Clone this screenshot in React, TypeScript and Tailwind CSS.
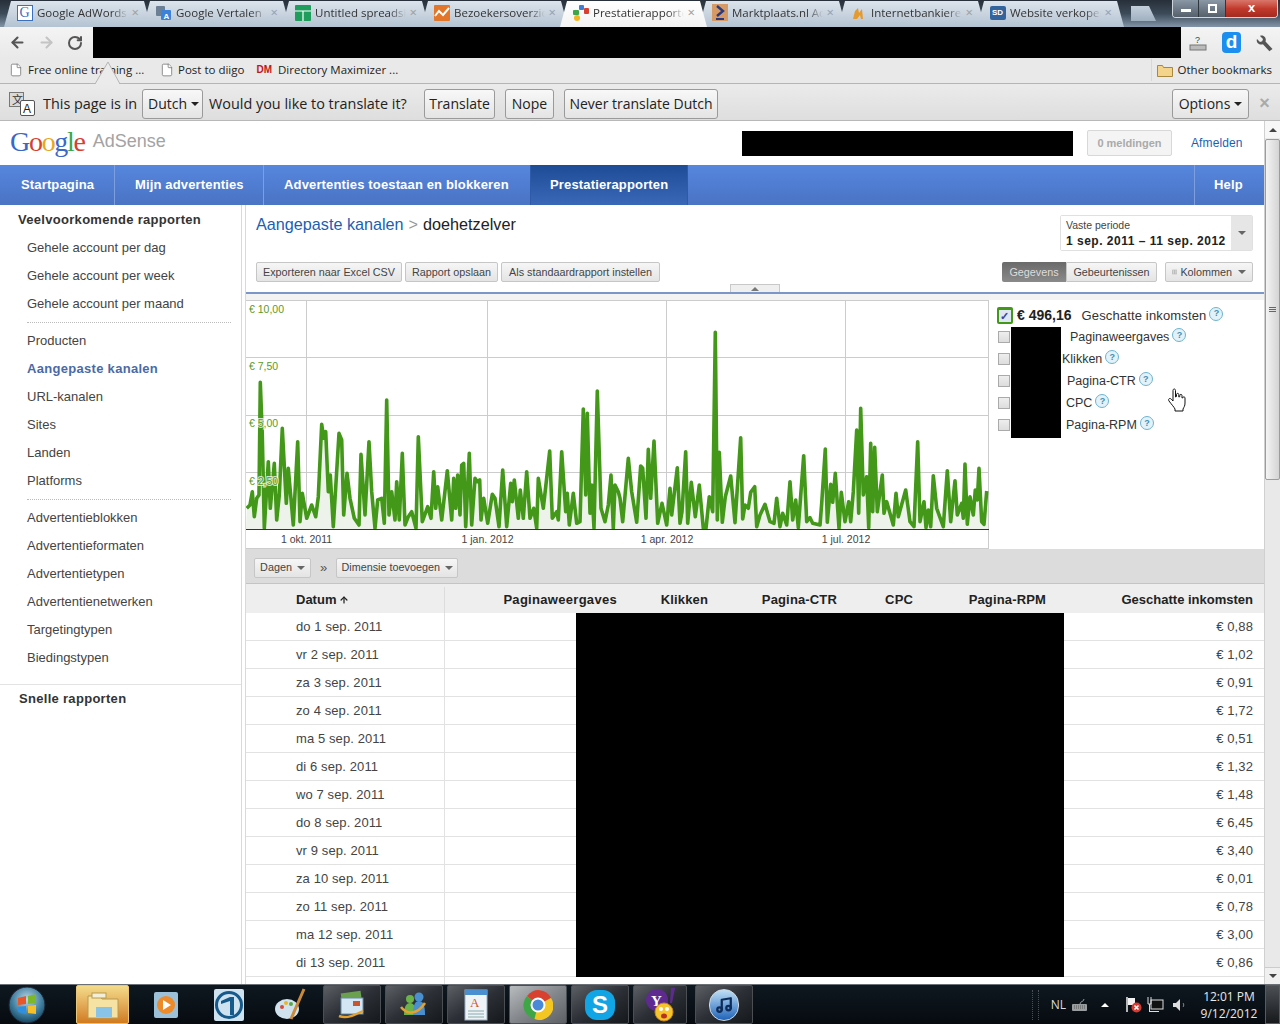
import React from "react";
import { ArrowLeft, ArrowRight, RotateCw, File, ArrowUp, Music } from "lucide-react";

const arial = "font-['Liberation_Sans',Arial,sans-serif]";
const ui = "font-['Open_Sans','Noto_Sans',sans-serif]";

// chart points read off the screenshot, two crops with their own x offset
const partA = [5,640,15,630,22,590,28,665,35,610,42,600,46,262,52,420,58,700,70,500,76,640,88,505,95,675,103,600,112,400,124,625,130,520,145,690,158,440,165,680,172,595,185,670,200,630,212,665,220,605,230,388,236,430,242,410,250,590,256,540,265,695,282,415,290,435,296,660,306,535,315,610,328,670,342,690,348,478,360,660,372,440,380,590,390,700,398,615,410,610,418,685,425,315,432,660,440,590,450,675,455,560,463,675,472,475,480,690,490,665,500,650,513,700,520,425,532,680,548,635,558,670,566,530,572,640,578,575,590,675,607,527,620,675,626,550,632,640,638,540,645,660,650,510,656,505,662,695,673,475,680,690,690,550,697,560,704,555,708,675,716,610,728,685,742,598,750,610,762,695,773,525,785,695,797,565,802,620,808,555,820,670,826,585,835,670,845,530,855,670,866,640,875,700,880,550,895,640,914,468,922,670,935,650,940,675,950,470,962,650,967,595,973,690,985,595,995,685,1005,680,1015,342,1022,600,1027,355,1035,655,1040,570,1047,700,1057,288,1068,640,1080,680,1090,630,1098,540,1105,700,1110,570,1120,590];
const partB = [0,610,8,680,25,490,35,590,50,682,62,513,68,520,78,670,85,463,92,610,102,438,113,685,126,625,140,690,150,580,155,660,172,518,180,685,186,650,197,470,203,685,214,562,226,665,238,570,250,700,258,700,268,605,278,650,286,112,292,675,298,472,307,682,316,605,332,543,345,683,362,428,368,672,375,630,385,640,392,592,404,575,410,695,420,660,435,628,450,680,462,685,470,610,480,695,488,655,500,690,510,560,518,675,527,615,535,698,551,482,560,680,570,668,578,685,600,690,605,625,616,462,622,682,632,568,638,622,646,535,657,700,664,592,675,680,686,620,692,680,700,590,710,405,716,655,722,340,730,600,740,545,746,698,752,445,758,650,764,457,772,650,787,540,792,655,800,620,820,690,828,595,835,665,857,585,870,680,882,695,893,440,900,680,912,620,918,698,925,645,932,695,940,542,950,640,970,695,982,527,992,680,1005,557,1012,660,1025,625,1030,670,1035,507,1042,688,1050,605,1060,660,1066,585,1072,615,1077,520,1085,680,1092,688,1100,588];

const toPoints = (arr: number[], off: number) => {
  const out: string[] = [];
  for (let i = 0; i < arr.length; i += 2) {
    out.push(`${(arr[i] / 3 + off - 246).toFixed(1)},${(arr[i + 1] / 3 + 295 - 300).toFixed(1)}`);
  }
  return out;
};
const linePts = [...toPoints(partA, 245), ...toPoints(partB, 620)].join(" ");

const rows = [
  ["do 1 sep. 2011", "€ 0,88"],
  ["vr 2 sep. 2011", "€ 1,02"],
  ["za 3 sep. 2011", "€ 0,91"],
  ["zo 4 sep. 2011", "€ 1,72"],
  ["ma 5 sep. 2011", "€ 0,51"],
  ["di 6 sep. 2011", "€ 1,32"],
  ["wo 7 sep. 2011", "€ 1,48"],
  ["do 8 sep. 2011", "€ 6,45"],
  ["vr 9 sep. 2011", "€ 3,40"],
  ["za 10 sep. 2011", "€ 0,01"],
  ["zo 11 sep. 2011", "€ 0,78"],
  ["ma 12 sep. 2011", "€ 3,00"],
  ["di 13 sep. 2011", "€ 0,86"],
  ["", ""],
];

const groups = [
  ["Gehele account per dag", "Gehele account per week", "Gehele account per maand"],
  ["Producten", "Aangepaste kanalen", "URL-kanalen", "Sites", "Landen", "Platforms"],
  ["Advertentieblokken", "Advertentieformaten", "Advertentietypen", "Advertentienetwerken", "Targetingtypen", "Biedingstypen"],
];

const legend = [
  { label: "Paginaweergaves", spacer: "w-[60px]" },
  { label: "Klikken", spacer: "w-[52px]" },
  { label: "Pagina-CTR", spacer: "w-[57px]" },
  { label: "CPC", spacer: "w-[56px]" },
  { label: "Pagina-RPM", spacer: "w-[56px]" },
];

const Caret = ({ className = "" }: { className?: string }) => (
  <span className={`inline-block w-0 h-0 border-x-[4px] border-x-transparent border-t-[4px] border-t-[#666] ${className}`} />
);

const HelpDot = () => (
  <span className={`ml-[3px] -mt-1 inline-flex items-center justify-center w-[14px] h-[14px] rounded-full border border-[#6db3d0] bg-[#e3f2f8] text-[9px] font-bold leading-none text-[#3f8fb5] ${arial}`}>?</span>
);

const GrayBtn = ({ children, className = "" }: { children: React.ReactNode; className?: string }) => (
  <button className={`h-[20px] px-[6px] rounded-[2px] border border-[#c6c6c6] bg-gradient-to-b from-[#f6f6f6] to-[#e4e4e4] text-[10.800px] text-[#444] flex items-center whitespace-nowrap ${className}`}>
    {children}
  </button>
);

const TransBtn = ({ children, className = "" }: { children: React.ReactNode; className?: string }) => (
  <button className={`h-[30px] px-[5px] rounded-[3px] border border-[#9a9a9a] bg-gradient-to-b from-[#f8f8f8] to-[#e4e4e4] text-[14px] text-[#222] flex items-center gap-[4px] whitespace-nowrap ${className}`}>
    {children}
  </button>
);

const tabs: { title: string; icon: React.ReactNode; active?: boolean }[] = [
  {
    title: "Google AdWords",
    icon: <span className="w-[16px] h-[16px] border border-[#3b6fc0] bg-white text-[#3b6fc0] text-[14px] leading-[14px] text-center font-['Liberation_Serif',serif]">G</span>,
  },
  {
    title: "Google Vertalen",
    icon: (
      <svg width="17" height="17" viewBox="0 0 17 17">
        <rect x="1" y="2" width="9" height="10" rx="1" fill="#6b7f95" />
        <rect x="6" y="6" width="10" height="10" rx="1" fill="#3b82d8" />
        <text x="8.5" y="14.5" fontSize="8" fill="#fff" fontWeight="bold" fontFamily="Liberation Sans">A</text>
      </svg>
    ),
  },
  {
    title: "Untitled spreadsheet",
    icon: (
      <svg width="16" height="16" viewBox="0 0 16 16">
        <rect width="16" height="16" rx="1" fill="#1f9d5c" />
        <path d="M0 6h16M8 6v10" stroke="#fff" strokeWidth="1.2" />
      </svg>
    ),
  },
  {
    title: "Bezoekersoverzicht",
    icon: (
      <svg width="16" height="16" viewBox="0 0 16 16">
        <rect width="16" height="16" rx="1" fill="#e2762a" />
        <path d="M1 11l4-5 4 4 6-7" stroke="#fff" strokeWidth="2" fill="none" />
      </svg>
    ),
  },
  {
    title: "Prestatierapporten",
    active: true,
    icon: (
      <svg width="16" height="16" viewBox="0 0 16 16">
        <rect x="6" y="0" width="5" height="5" fill="#3f7fdc" rx="1" />
        <rect x="11" y="3" width="5" height="6" fill="#d8402f" rx="1" />
        <rect x="0" y="5" width="6" height="5" fill="#3fa648" rx="1" />
        <circle cx="4" cy="13" r="3" fill="#f3b521" />
      </svg>
    ),
  },
  {
    title: "Marktplaats.nl Advertentie",
    icon: (
      <svg width="16" height="17" viewBox="0 0 16 17">
        <rect width="16" height="17" fill="#d59a66" />
        <path d="M5 2l6 5-6 5" stroke="#2a3a80" strokeWidth="2.4" fill="none" />
        <path d="M4 15h8" stroke="#2a3a80" strokeWidth="2" />
      </svg>
    ),
  },
  {
    title: "Internetbankieren",
    icon: (
      <svg width="16" height="16" viewBox="0 0 16 16">
        <path d="M2 14l2-8 3-3 1 5 3-4 1 10h-2l-1-4-3 4z" fill="#e49a2c" />
      </svg>
    ),
  },
  {
    title: "Website verkopen",
    icon: <span className={`w-[16px] h-[14px] rounded-[2px] bg-[#33649c] text-white text-[8px] leading-[14px] text-center font-bold ${arial}`}>SD</span>,
  },
];

const TabStrip = () => (
  <div className="h-[27px] shrink-0 relative flex items-end pl-[4px] bg-gradient-to-b from-[#27303a] via-[#3c4a58] to-[#8295a8]">
    {tabs.map((t) => (
      <div
        key={t.title}
        className={`w-[147px] -mr-[8px] h-[26px] shrink-0 flex items-center pl-[12px] pr-[12px] pb-[3px] gap-[4px] [clip-path:polygon(7px_0,calc(100%-7px)_0,100%_100%,0_100%)] ${
          t.active ? "relative z-10 bg-gradient-to-b from-white to-[#f3f3f3]" : "bg-gradient-to-b from-[#dce4ec] to-[#b4c3d2]"
        }`}
      >
        <span className="w-[17px] h-[17px] shrink-0 flex items-center justify-center">{t.icon}</span>
        <span className={`flex-1 overflow-hidden whitespace-nowrap text-[11.500px] text-[#333] [mask-image:linear-gradient(90deg,#000_82%,transparent)] ${ui}`}>{t.title}</span>
        <span className="text-[#9aa3ad] text-[13px] leading-none">×</span>
      </div>
    ))}
    <div className="ml-[10px] mb-[6px] w-[30px] h-[15px] bg-gradient-to-b from-[#c4d0dc] to-[#9fb0c0] [clip-path:polygon(5px_0,calc(100%-7px)_0,100%_100%,5px_100%)]" />
    <div className="absolute right-[2px] top-0 h-[18px] w-[106px] flex rounded-b-[4px] border border-t-0 border-[#cfd6dd] overflow-hidden">
      <div className="w-[26px] bg-gradient-to-b from-[#8a97a5] to-[#55606c] flex items-center justify-center border-r border-[#30363d]">
        <span className="w-[10px] h-[3px] mt-[4px] bg-white" />
      </div>
      <div className="w-[27px] bg-gradient-to-b from-[#8a97a5] to-[#55606c] flex items-center justify-center border-r border-[#30363d]">
        <span className="w-[9px] h-[9px] border-2 border-white" />
      </div>
      <div className={`flex-1 bg-gradient-to-b from-[#d9766a] via-[#c23a2c] to-[#a42a20] text-white text-center text-[13px] leading-[16px] font-bold ${arial}`}>x</div>
    </div>
  </div>
);

const Toolbar = () => (
  <div className="h-[31px] shrink-0 flex items-center bg-gradient-to-b from-[#f4f4f4] to-[#e9e9e9]">
    <div className="w-[93px] flex items-center pl-[9px] gap-[12px]">
      <ArrowLeft size={17} strokeWidth={3} color="#555" />
      <ArrowRight size={17} strokeWidth={3} color="#c4c4c4" />
      <RotateCw size={16} strokeWidth={3} color="#555" />
    </div>
    <div className="w-[1088px] h-full bg-black" />
    <div className="flex-1 flex items-center pl-[7px]">
      <svg width="20" height="20" viewBox="0 0 20 20">
        <text x="7" y="10" fontSize="9" fill="#444" fontFamily="Liberation Sans">?</text>
        <rect x="2" y="12" width="16" height="5" fill="#bbb" stroke="#777" />
      </svg>
      <span className={`ml-[14px] w-[19px] h-[21px] rounded-[4px] bg-[#1b8ef0] text-white text-[19px] leading-[19px] text-center font-bold ${arial}`}>d</span>
      <svg className="ml-[15px]" width="18" height="18" viewBox="0 0 18 18">
        <path d="M16.5 15l-7-7.5c.8-2.2 0-4.5-2-5.5C6.300 1.400 5 1.400 4 2l3 3-.8 2.200L4 8 1 5c-.6 1.400-.3 3 .9 4.300 1.300 1.200 3.300 1.600 5 .9l6.500 7z" fill="#555" />
      </svg>
    </div>
  </div>
);

const Bookmarks = () => (
  <div className={`h-[26px] shrink-0 relative flex items-center text-[11.500px] text-[#222] bg-[#e9e9e9] border-b border-[#b5b5b5] pl-[9px] pb-[2px] ${ui}`}>
    <File size={14} color="#666" fill="#fff" strokeWidth={1.2} />
    <span className="ml-[5px] w-[118px] whitespace-nowrap overflow-hidden">Free online training ...</span>
    <File size={14} color="#666" fill="#fff" strokeWidth={1.2} className="ml-[14px]" />
    <span className="ml-[4px]">Post to diigo</span>
    <span className={`ml-[12px] text-[10px] font-bold text-[#c01818] ${arial}`}>DM</span>
    <span className="ml-[6px]">Directory Maximizer ...</span>
    {/* arrow of the translate bubble, drawn over the bookmark */}
    <svg className="absolute left-[95px] top-[4px]" width="26" height="22" viewBox="0 0 26 22">
      <path d="M0 22L13 0l12 22z" fill="#ebebeb" stroke="#b5b5b5" />
      <path d="M1 22h23" stroke="#ebebeb" strokeWidth="2" />
    </svg>
    <span className="ml-auto h-[22px] border-l border-[#d8d8d8]" />
    <svg className="ml-[5px]" width="16" height="14" viewBox="0 0 16 14">
      <path d="M.5 2.500h5l1 2h9v9H.5z" fill="#f3d48a" stroke="#a8873f" />
    </svg>
    <span className="ml-[5px] pr-[8px]">Other bookmarks</span>
  </div>
);

const TranslateBar = () => (
  <div className={`h-[37px] shrink-0 flex items-center pt-[3px] bg-gradient-to-b from-[#ebebeb] to-[#dedede] border-b border-[#b8b8b8] text-[14.400px] text-[#222] ${ui}`}>
    <svg className="ml-[9px]" width="27" height="27" viewBox="0 0 27 27">
      <rect x="0.500" y="2.500" width="14" height="14" fill="#d9d9d9" stroke="#777" />
      <text x="3" y="14" fontSize="11" fill="#333" fontFamily="Noto Sans CJK SC">文</text>
      <rect x="11.500" y="10.500" width="14" height="15" rx="1.500" fill="#fff" stroke="#555" />
      <text x="14" y="23" fontSize="12" fill="#222" fontFamily="Liberation Sans">A</text>
    </svg>
    <span className="ml-[7px] w-[94px] whitespace-nowrap">This page is in</span>
    <TransBtn className="ml-[5px] w-[61px]">Dutch <span className="w-0 h-0 border-x-[4px] border-x-transparent border-t-[4px] border-t-[#222]" /></TransBtn>
    <span className="ml-[6px] w-[198px] whitespace-nowrap">Would you like to translate it?</span>
    <TransBtn className="ml-[17px] w-[71px] justify-center">Translate</TransBtn>
    <TransBtn className="ml-[10px] w-[49px] justify-center">Nope</TransBtn>
    <TransBtn className="ml-[10px] w-[154px] justify-center">Never translate Dutch</TransBtn>
    <TransBtn className="ml-auto w-[77px] justify-center">Options <span className="w-0 h-0 border-x-[4px] border-x-transparent border-t-[4px] border-t-[#222]" /></TransBtn>
    <span className={`w-[31px] text-center text-[18px] font-bold text-[#aaa] ${arial}`}>×</span>
  </div>
);

const TopNav = () => (
  <div className={`h-[40px] shrink-0 flex items-stretch bg-gradient-to-b from-[#5686de] to-[#4a74c4] text-white text-[13px] font-bold tracking-[0.15px] ${arial}`}>
    <div className="w-[115px] flex items-center pl-[21px] border-r border-[#7d9fdf]">Startpagina</div>
    <div className="w-[149px] flex items-center pl-[20px] border-r border-[#7d9fdf]">Mijn advertenties</div>
    <div className="w-[266px] flex items-center pl-[20px]">Advertenties toestaan en blokkeren</div>
    <div className="w-[158px] flex items-center pl-[19px] border-x border-[#2f5aa8] bg-gradient-to-b from-[#1e4c96] to-[#3a68b8]">Prestatierapporten</div>
    <div className="ml-auto w-[70px] flex items-center pl-[19px] border-l border-[#7d9fdf]">Help</div>
  </div>
);

const Sidebar = () => (
  <div className={`w-[242px] shrink-0 border-r border-[#d9d9d9] text-[13px] text-[#444] ${arial}`}>
    <div className="pl-[18px] pt-[1px] h-[29px] font-bold tracking-[0.3px] text-[#333] flex items-center">Veelvoorkomende rapporten</div>
    {groups.map((g, gi) => (
      <div key={gi} className={gi < 2 ? "ml-[27px] mr-[10px] flex flex-col border-b border-dotted border-[#bbb] pb-[4px] mb-[4px]" : "pl-[27px] flex flex-col border-b border-[#e3e3e3] pb-[12px]"}>
        {g.map((item) => (
          <div key={item} className={`h-[28px] flex items-center ${item === "Aangepaste kanalen" ? "font-bold tracking-[0.3px] text-[#4a6aa5]" : ""}`}>{item}</div>
        ))}
      </div>
    ))}
    <div className="pl-[19px] h-[28px] font-bold tracking-[0.3px] text-[#333] flex items-center">Snelle rapporten</div>
  </div>
);

const Chart = () => (
  <svg className="w-[743px] h-[249px] shrink-0 block" viewBox="0 0 743 249">
    <g stroke="#cccccc" strokeWidth="1" shapeRendering="crispEdges">
      <path d="M0 .5H743M0 57.500H743M0 115.500H743M0 172.500H743" />
      <path d="M60.500 0V229M241.500 0V229M420.500 0V229M599.500 0V229" />
      <path d="M742.500 0V249M0 248.500H743" />
    </g>
    <polygon points={`0,229 ${linePts} 742,229`} fill="#edf3ea" />
    <polyline points={linePts} fill="none" stroke="#43981a" strokeWidth="3.600" strokeLinejoin="round" />
    <path d="M0 229.500H743" stroke="#333" strokeWidth="1" shapeRendering="crispEdges" />
    <g fontSize="10.500" fill="#5a9a28" fontFamily="Liberation Sans" stroke="#ffffff" strokeOpacity="0.75" strokeWidth="2" paintOrder="stroke">
      <text x="3" y="13">€ 10,00</text>
      <text x="3" y="70">€ 7,50</text>
      <text x="3" y="127">€ 5,00</text>
      <text x="3" y="185">€ 2,50</text>
    </g>
    <g fontSize="10.500" fill="#444" fontFamily="Liberation Sans" textAnchor="middle">
      <text x="60.500" y="243">1 okt. 2011</text>
      <text x="241.500" y="243">1 jan. 2012</text>
      <text x="421" y="243">1 apr. 2012</text>
      <text x="600" y="243">1 jul. 2012</text>
    </g>
  </svg>
);

const Legend = () => (
  <div className={`relative flex-1 pl-[8px] pt-[6px] text-[12.500px] text-[#333] ${arial}`}>
    <div className="h-[19px] flex items-center text-[13px] tracking-[0.15px]">
      <span className="w-[16px] h-[17px] rounded-[2px] bg-[#43981a] flex items-center justify-center">
        <span className="w-[12px] h-[12px] bg-[#dfe6f4] text-[#34479c] text-[11px] leading-[12px] text-center font-bold">✓</span>
      </span>
      <span className="ml-[4px] text-[14px] font-bold tracking-normal text-[#222]">€ 496,16</span>
      <span className="ml-[10px]">Geschatte inkomsten</span>
      <HelpDot />
    </div>
    {legend.map((l, i) => (
      <div key={l.label} className={`h-[22px] flex items-center pl-[1px] ${i === 0 ? "mt-[1px]" : ""}`}>
        <span className="w-[12px] h-[12px] shrink-0 border border-[#aaa] bg-gradient-to-b from-[#eee] to-[#ddd]" />
        <span className={`${l.spacer} shrink-0`} />
        <span>{l.label}</span>
        <HelpDot />
      </div>
    ))}
    <div className="absolute left-[22px] top-[27px] w-[50px] h-[111px] bg-black" />
    <svg className="absolute left-[178px] top-[88px]" width="20" height="24" viewBox="0 0 20 24">
      <path d="M6 2.500c0-2 2.500-2 2.500 0V9l1-.5V6.500c0-1.500 2.300-1.500 2.300 0V9l1-.3V7.500c0-1.500 2.200-1.500 2.200 0V10l.8-.2c0-1.300 2.200-1.300 2.200.2v5c0 3-1 4-2 6v2H8v-2c-1-2-3-4-6-8-1.300-2 .8-3.500 2.300-1.800L6 13z" fill="#fff" stroke="#111" strokeWidth="1" />
    </svg>
  </div>
);

const Main = () => (
  <div className={`relative flex-1 min-w-0 ml-[3px] border-l border-[#d9d9d9] flex flex-col ${arial}`}>
    <div className="h-[88px] shrink-0 relative px-[10px] bg-white">
      <div className="pt-[8px] flex items-center text-[16.200px] leading-[22px]">
        <span className="text-[#1a5fb4]">Aangepaste kanalen</span>
        <span className="ml-[5px] text-[#999]">&gt;</span>
        <span className="ml-[5px] text-[#222]">doehetzelver</span>
      </div>
      <div className="absolute right-[11px] top-[10px] w-[193px] h-[36px] flex border border-[#e0e0e0] rounded-[2px]">
        <div className="flex-1 pl-[5px] pt-[3px] bg-white">
          <div className="text-[10.500px] leading-[13px] text-[#444]">Vaste periode</div>
          <div className="mt-[1px] text-[12px] leading-[16px] font-bold tracking-[0.5px] text-[#222] whitespace-nowrap">1 sep. 2011 – 11 sep. 2012</div>
        </div>
        <div className="w-[21px] bg-[#e6e6e6] flex items-center justify-center"><Caret /></div>
      </div>
      <div className="absolute left-[10px] right-[11px] top-[57px] flex items-center">
        <GrayBtn className="w-[146px] justify-center">Exporteren naar Excel CSV</GrayBtn>
        <GrayBtn className="ml-[3px] w-[93px] justify-center">Rapport opslaan</GrayBtn>
        <GrayBtn className="ml-[3px] w-[159px] justify-center">Als standaardrapport instellen</GrayBtn>
        <div className="ml-auto flex">
          <span className="w-[64px] h-[20px] rounded-l-[2px] bg-gradient-to-b from-[#6a6a6a] to-[#8a8a8a] text-[#ddd] text-[10.800px] flex items-center justify-center">Gegevens</span>
          <GrayBtn className="w-[91px] justify-center !rounded-l-none">Gebeurtenissen</GrayBtn>
        </div>
        <GrayBtn className="ml-[8px] w-[88px] justify-center gap-[3px]">
          <svg width="10" height="8" viewBox="0 0 10 8"><path d="M.5.500h9v7h-9zM.5 4h9M5 .5v7" fill="none" stroke="#999" /></svg>
          Kolommen <Caret className="ml-[3px]" />
        </GrayBtn>
      </div>
      <div className="absolute left-0 right-0 bottom-[-1px] h-[2px] bg-[#7b97c8]" />
      <div className="absolute left-[484px] bottom-[1px] w-[50px] h-[8px] bg-[#efefef] border border-b-0 border-[#c8c8c8] flex items-center justify-center">
        <span className="w-0 h-0 border-x-[4px] border-x-transparent border-b-[4px] border-b-[#777]" />
      </div>
    </div>
    <div className="h-[7px] shrink-0 bg-[#f3f3f3]" />
    <div className="h-[249px] shrink-0 flex">
      <Chart />
      <Legend />
    </div>
    <div className="h-[35px] shrink-0 flex items-center pl-[8px] pt-[3px] bg-[#dcdcdc] border-b border-[#c4c4c4]">
      <GrayBtn className="w-[57px] justify-center gap-[5px]">Dagen <Caret /></GrayBtn>
      <span className="ml-[9px] text-[13px] text-[#555]">»</span>
      <GrayBtn className="ml-[9px] w-[122px] justify-center gap-[5px]">Dimensie toevoegen <Caret /></GrayBtn>
    </div>
    <div className="flex-1 min-h-0 overflow-hidden relative">
      <div className="grid grid-cols-[199px_182px_91px_129px_76px_133px_207px] h-[29px] pt-[3px] bg-[#eeeeee] items-center text-[13px] font-bold text-[#222] text-right [&>span]:pr-[10px]">
        <span className="h-full flex items-center justify-start pl-[50px] gap-[3px] border-r border-[#dcdcdc]">Datum <ArrowUp size={10} strokeWidth={3} /></span>
        <span className="tracking-[0.3px]">Paginaweergaves</span>
        <span className="tracking-[0.15px]">Klikken</span>
        <span className="tracking-[0.15px]">Pagina-CTR</span>
        <span className="tracking-[0.15px]">CPC</span>
        <span className="tracking-[0.15px]">Pagina-RPM</span>
        <span>Geschatte inkomsten</span>
      </div>
      {rows.map(([d, v], i) => (
        <div key={i} className="h-[28px] flex items-center border-b border-[#e2e2e2] text-[13px] tracking-[0.1px] text-[#444]">
          <span className="w-[199px] h-full flex items-center pl-[50px] border-r border-[#e2e2e2]">{d}</span>
          <span className="ml-auto pr-[11px]">{v}</span>
        </div>
      ))}
      <div className="absolute left-[330px] top-[29px] w-[488px] h-[364px] bg-black" />
    </div>
  </div>
);

const Scrollbar = () => (
  <div className="w-[16px] shrink-0 flex flex-col bg-[#e9e9e9] border-l border-[#d0d0d0]">
    <div className="h-[17px] flex items-center justify-center bg-[#f7f7f7]">
      <span className="w-0 h-0 border-x-[4px] border-x-transparent border-b-[4px] border-b-[#444]" />
    </div>
    <div className="mt-[1px] h-[341px] flex flex-col items-center justify-center gap-[1px] bg-gradient-to-r from-[#f4f4f4] to-[#d4d4d4] border border-[#9c9c9c] rounded-[2px]">
      <span className="w-[7px] h-px bg-[#666]" />
      <span className="w-[7px] h-px bg-[#666]" />
      <span className="w-[7px] h-px bg-[#666]" />
    </div>
    <div className="mt-auto h-[17px] flex items-center justify-center bg-[#f0f0f0] border-t border-[#ccc]">
      <span className="w-0 h-0 border-x-[4px] border-x-transparent border-t-[4px] border-t-[#444]" />
    </div>
  </div>
);

const AppBox = ({ children, className = "" }: { children: React.ReactNode; className?: string }) => (
  <div className={`w-[58px] h-[39px] shrink-0 flex items-center justify-center rounded-[2px] border border-[#4b4f54] bg-gradient-to-br from-[#5c6065] via-[#2c3036] to-[#15181c] ${className}`}>
    {children}
  </div>
);

const Taskbar = () => (
  <div className={`h-[40px] shrink-0 flex items-center border-t border-[#6b7076] bg-gradient-to-b from-[#0e1820] to-[#070b10] ${ui}`}>
    <svg className="ml-[8px]" width="38" height="38" viewBox="0 0 38 38">
      <defs>
        <radialGradient id="orb" cx="50%" cy="35%" r="70%">
          <stop offset="0%" stopColor="#bcd8e8" />
          <stop offset="60%" stopColor="#3f7e9e" />
          <stop offset="100%" stopColor="#0d3a52" />
        </radialGradient>
      </defs>
      <circle cx="19" cy="19" r="18" fill="url(#orb)" stroke="#223" />
      <path d="M10 12l8-2v8l-8 1z" fill="#e8562a" />
      <path d="M20 10l8-2v9l-8 1z" fill="#7cb82a" />
      <path d="M10 21l8-1v8l-8-2z" fill="#2f8fe0" />
      <path d="M20 20l8-1v9l-8-1z" fill="#f6c02a" />
    </svg>
    <div className="ml-[22px] w-[8px]" />
    <div className="w-[53px] h-[39px] shrink-0 flex items-center justify-center rounded-[2px] border border-[#e8c878] bg-gradient-to-b from-[#f3dc8a] to-[#d07a1c]">
      <svg width="34" height="30" viewBox="0 0 34 30">
        <path d="M2 6h12l2 3h16v19H2z" fill="#f6e3a3" stroke="#b89a50" />
        <rect x="6" y="3" width="14" height="5" fill="#f3eed8" stroke="#b89a50" />
        <rect x="10" y="17" width="16" height="10" fill="#8ac3e8" />
      </svg>
    </div>
    <div className="w-[8px]" />
    <div className="w-[58px] flex justify-center">
      <svg width="26" height="30" viewBox="0 0 26 30">
        <rect x="1" y="2" width="24" height="26" rx="2" fill="#9cc0d8" />
        <circle cx="13" cy="15" r="9" fill="#ed8a2a" />
        <path d="M10 10l8 5-8 5z" fill="#fff" />
      </svg>
    </div>
    <div className="w-[3px]" />
    <div className="w-[62px] flex justify-center">
      <svg width="32" height="34" viewBox="0 0 32 34">
        <rect x="1" y="1" width="30" height="32" rx="2" fill="#cfe2ef" />
        <circle cx="16" cy="17" r="12.500" fill="none" stroke="#155a8a" strokeWidth="3" />
        <path d="M8 13l9-4h4v18h-4V13l-9 3z" fill="#155a8a" />
      </svg>
    </div>
    <div className="w-[60px] flex justify-center">
      <svg width="32" height="34" viewBox="0 0 32 34">
        <ellipse cx="13" cy="21" rx="12" ry="10" fill="#cfe2ee" />
        <circle cx="8" cy="19" r="2" fill="#d64a3a" />
        <circle cx="12" cy="15" r="2" fill="#e9b42a" />
        <circle cx="17" cy="16" r="2" fill="#58a844" />
        <path d="M30 1L17 31" stroke="#c98a3a" strokeWidth="3" />
      </svg>
    </div>
    <div className="w-[3px]" />
    <div className="flex gap-[4px]">
      <AppBox>
        <svg width="32" height="32" viewBox="0 0 32 32">
          <rect x="6" y="3" width="20" height="20" fill="#6aa050" transform="rotate(-8 16 13)" />
          <rect x="5" y="9" width="22" height="16" fill="#d3e6f3" stroke="#6b8ba4" />
          <rect x="17" y="12" width="7" height="5" fill="#c9552f" />
          <path d="M3 27c8 3 16-1 24-5" stroke="#e6a02c" strokeWidth="2.500" fill="none" />
        </svg>
      </AppBox>
      <AppBox>
        <svg width="32" height="32" viewBox="0 0 32 32">
          <circle cx="12" cy="10" r="4" fill="#6bb24a" />
          <path d="M6 26c0-8 2-12 6-12s6 4 6 12z" fill="#6bb24a" />
          <circle cx="21" cy="8" r="4.500" fill="#4a8fd0" />
          <path d="M15 26c0-10 2-14 6-14s6 4 6 14z" fill="#4a8fd0" />
          <path d="M3 18c6 8 16 8 24-4" stroke="#e6a02c" strokeWidth="2.500" fill="none" />
        </svg>
      </AppBox>
      <AppBox>
        <svg width="26" height="34" viewBox="0 0 26 34">
          <rect x="2" y="2" width="22" height="30" fill="#eef3f8" stroke="#9bb0c4" />
          <rect x="2" y="2" width="22" height="5" fill="#4a8fd0" />
          <text x="7" y="19" fontSize="13" fill="#d2552a" fontFamily="Liberation Serif">A</text>
          <path d="M5 23h16M5 26h16M5 29h16" stroke="#8aa" />
        </svg>
      </AppBox>
      <AppBox className="!from-[#b9bcbf] !via-[#84878b] !to-[#5d6064]">
        <svg width="30" height="30" viewBox="0 0 30 30">
          <path d="M15 15L4 6a14 14 0 0 1 24 2z" fill="#d8402f" />
          <path d="M15 15L4 6a14 14 0 0 0 7.500 23z" fill="#3fa648" />
          <path d="M15 15l13-7a14 14 0 0 1-16.500 21z" fill="#f3c622" />
          <circle cx="15" cy="15" r="6.500" fill="#4a88d8" stroke="#fff" strokeWidth="2" />
        </svg>
      </AppBox>
      <AppBox>
        <span className={`w-[30px] h-[30px] rounded-[12px] bg-[#12a5e6] text-white text-[24px] leading-[30px] text-center font-bold ${arial}`}>S</span>
      </AppBox>
      <AppBox className="!w-[54px]">
        <svg width="34" height="36" viewBox="0 0 34 36">
          <circle cx="14" cy="13" r="11" fill="#5f2a8f" />
          <text x="8" y="19" fontSize="15" fill="#fff" fontWeight="bold" fontFamily="Liberation Serif">Y</text>
          <path d="M28 1h4l-3 15h-2z" fill="#5f2a8f" />
          <circle cx="21" cy="25" r="9" fill="#f6c52c" stroke="#c98a1c" />
          <ellipse cx="21" cy="29" rx="3" ry="2.500" fill="#b9321f" />
          <circle cx="18" cy="22" r="2" fill="#fff" />
          <circle cx="24" cy="22" r="2" fill="#fff" />
        </svg>
      </AppBox>
      <AppBox className="ml-[4px]">
        <span className="w-[30px] h-[32px] rounded-full bg-gradient-to-b from-[#bfe0f5] to-[#1d63b8] border border-[#cfd8e0] flex items-center justify-center">
          <Music size={18} color="#0c2b58" strokeWidth={3} />
        </span>
      </AppBox>
    </div>
    <div className="ml-auto flex items-center text-white">
      <div className="h-[30px] w-[7px] border-x border-dotted border-[#4a4f55]" />
      <span className="ml-[12px] text-[12px] text-[#ddd]">NL</span>
      <svg className="ml-[5px]" width="17" height="16" viewBox="0 0 17 16">
        <rect x="1" y="7" width="15" height="7" rx="1" fill="#9a9da0" />
        <path d="M9 7c0-3 4-2 4-5" stroke="#9a9da0" fill="none" />
        <path d="M3 9h11M3 11h11" stroke="#555" strokeDasharray="1 1" />
      </svg>
      <span className="ml-[13px] w-0 h-0 border-x-[4px] border-x-transparent border-b-[4px] border-b-white" />
      <svg className="ml-[16px]" width="17" height="17" viewBox="0 0 17 17">
        <path d="M2 1v15" stroke="#eee" strokeWidth="1.500" />
        <path d="M3 2h7v7H3z" fill="#f2f2f2" />
        <circle cx="11.500" cy="11.500" r="5" fill="#d8392f" />
        <path d="M9.500 9.500l4 4M13.500 9.500l-4 4" stroke="#fff" strokeWidth="1.500" />
      </svg>
      <svg className="ml-[5px]" width="17" height="17" viewBox="0 0 17 17">
        <rect x="4" y="4" width="12" height="9" fill="#111" stroke="#ddd" />
        <path d="M1 1v7M4 1v7M1 8h3M2.500 8v8M2.500 15.500H12" stroke="#ddd" />
      </svg>
      <svg className="ml-[9px]" width="14" height="14" viewBox="0 0 14 14">
        <path d="M0 5h3l4-4v12l-4-4H0z" fill="#ddd" />
        <path d="M10 5c1 1 1 3 0 4" stroke="#888" fill="none" />
      </svg>
      <div className="ml-[11px] w-[62px] text-center text-[12px] leading-[17px] text-[#e8e8e8]">
        <div>12:01 PM</div>
        <div>9/12/2012</div>
      </div>
      <div className="ml-[5px] w-[15px] h-[39px] border border-[#565b60] bg-gradient-to-b from-[#4c5055] to-[#17191c]" />
    </div>
  </div>
);

const Page = () => (
  <div className="flex-1 min-h-0 flex">
    <div className="flex-1 min-w-0 flex flex-col bg-white">
      <div className={`h-[44px] shrink-0 relative flex items-center pl-[10px] ${arial}`}>
        <span className="-mt-[3px] font-['Liberation_Serif',serif] text-[28px] leading-none tracking-[-1.300px]">
          <span className="text-[#3b68c8]">G</span>
          <span className="text-[#d8402f]">o</span>
          <span className="text-[#e8a81c]">o</span>
          <span className="text-[#3b68c8]">g</span>
          <span className="text-[#3fa648]">l</span>
          <span className="text-[#d8402f]">e</span>
        </span>
        <span className="-mt-[3px] ml-[8px] text-[18px] text-[#a3a3a3]">AdSense</span>
        <div className="ml-auto mr-[14px] w-[331px] h-[25px] bg-black" />
        <button className="w-[85px] h-[26px] rounded-[2px] border border-[#d8d8d8] bg-[#f4f4f4] text-[11px] font-bold text-[#aaa]">0 meldingen</button>
        <span className="ml-[19px] mr-[21px] w-[52px] text-[12px] tracking-[0.1px] text-[#1a5fb4]">Afmelden</span>
      </div>
      <TopNav />
      <div className="flex-1 min-h-0 flex">
        <Sidebar />
        <Main />
      </div>
    </div>
    <Scrollbar />
  </div>
);

export default function App() {
  return (
    <div className="w-[1280px] h-[1024px] overflow-hidden flex flex-col bg-white">
      <TabStrip />
      <Toolbar />
      <Bookmarks />
      <TranslateBar />
      <Page />
      <Taskbar />
    </div>
  );
}
